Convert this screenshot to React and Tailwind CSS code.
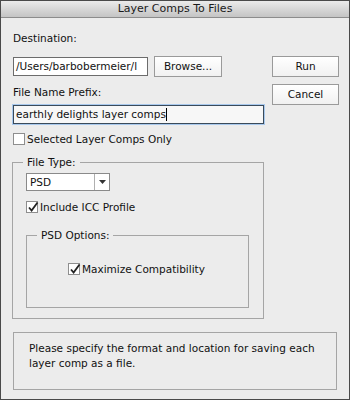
import React from "react";

const font = { fontFamily: '"DejaVu Sans", "Noto Sans", sans-serif' };

function Check({ checked }) {
  return (
    <span className="relative inline-block w-[12px] h-[12px] bg-white border border-[#8e8e8e] shrink-0">
      {checked && (
        <svg className="absolute left-[0px] top-[-1px]" width="12" height="12" viewBox="0 0 12 12">
          <path d="M2 6.5 L4.6 9.5 L10.5 1.5" fill="none" stroke="#222" strokeWidth="1.8" />
        </svg>
      )}
    </span>
  );
}

function Btn({ children, className = "" }) {
  return (
    <div className={"h-[21px] flex items-center justify-center bg-gradient-to-b from-white to-[#f1f1f1] border border-[#9a9a9a] text-[#111] " + className}>
      {children}
    </div>
  );
}

export default function App() {
  return (
    <div className="w-[350px] h-[400px] bg-[#ececec] border border-[#4a4a4a] flex flex-col text-[10.5px] text-[#111] overflow-hidden" style={font}>
      <div className="h-[17px] bg-gradient-to-b from-[#ebebeb] to-[#c4c4c4] border-b border-[#8c8c8c] flex items-center justify-center text-[11px] text-[#1a1a1a] shrink-0">
        Layer Comps To Files
      </div>
      <div className="flex pl-[12px]">
        <div className="w-[251px] flex flex-col">
          <div className="mt-[13px] leading-[14px]">Destination:</div>
          <div className="mt-[11px] flex items-center">
            <div className="w-[135px] h-[19px] bg-white border border-[#6c6c6c] px-[2px] leading-[17px] overflow-hidden whitespace-nowrap">/Users/barbobermeier/l</div>
            <Btn className="ml-[6px] w-[68px]">Browse...</Btn>
          </div>
          <div className="mt-[8px] leading-[14px]">File Name Prefix:</div>
          <div className="mt-[6px] h-[19px] bg-[#f7f7f7] border border-[#3a4a5a] shadow-[0_0_0_1px_#a8c8ec] px-[2px] leading-[17px] flex items-center">
            earthly delights layer comps<span className="w-px h-[13px] bg-black" />
          </div>
          <div className="mt-[8px] flex items-center gap-[2px] leading-[14px]">
            <Check />
            <span>Selected Layer Comps Only</span>
          </div>
          <div className="relative mt-[16px] border border-[#a5a5a5] h-[157px] ml-[-1px] pt-[10px] pl-[13px] pr-[14px]">
            <div className="absolute left-[10px] top-[-8px] px-[4px] bg-[#ececec] leading-[14px]">File Type:</div>
            <div className="w-[84px] h-[18px] bg-white border border-[#8a8a8a] flex">
              <div className="flex-1 pl-[3px] leading-[16px]">PSD</div>
              <div className="w-[15px] border-l border-[#b0b0b0] flex items-center justify-center">
                <svg width="7" height="4" viewBox="0 0 7 4"><path d="M0 0 H7 L3.5 4 Z" fill="#333" /></svg>
              </div>
            </div>
            <div className="mt-[9px] flex items-center gap-[2px] leading-[14px]">
              <Check checked />
              <span>Include ICC Profile</span>
            </div>
            <div className="relative mt-[21px] border border-[#a5a5a5] h-[73px] flex items-start pt-[26px] pl-[41px]">
              <div className="absolute left-[10px] top-[-8px] px-[4px] bg-[#ececec] leading-[14px]">PSD Options:</div>
              <div className="flex items-center gap-[2px] leading-[14px]">
                <Check checked />
                <span>Maximize Compatibility</span>
              </div>
            </div>
          </div>
        </div>
        <div className="ml-[8px] mt-[38px] flex flex-col gap-[7px]">
          <Btn className="w-[67px]">Run</Btn>
          <Btn className="w-[67px]">Cancel</Btn>
        </div>
      </div>
      <div className="mx-[12px] mt-[13px] h-[58px] border border-[#a5a5a5] pl-[15px] pr-[10px] pt-[8px] leading-[15px]">
        Please specify the format and location for saving each layer comp as a file.
      </div>
    </div>
  );
}
